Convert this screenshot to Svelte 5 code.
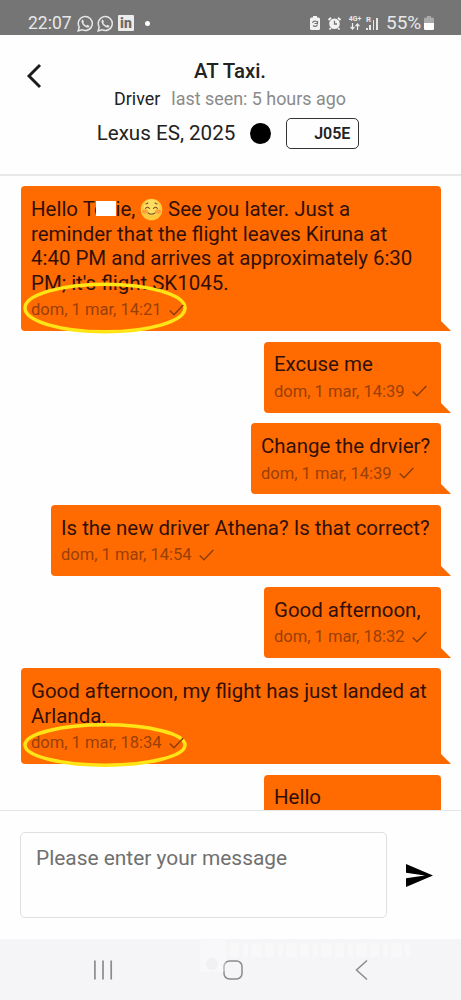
<!-- App.svelte -->
<script lang="ts">
    interface Message {
        lines: string[];
        time?: string;
        width: number;
        circled?: boolean;
        greeting?: boolean;
    }

    const messages: Message[] = [
        {
            lines: [
                ' See you later. Just a',
                'reminder that the flight leaves Kiruna at',
                '4:40 PM and arrives at approximately 6:30',
                "PM; it's flight SK1045."
            ],
            time: 'dom, 1 mar, 14:21',
            width: 420,
            circled: true,
            greeting: true
        },
        { lines: ['Excuse me'], time: 'dom, 1 mar, 14:39', width: 177 },
        { lines: ['Change the drvier?'], time: 'dom, 1 mar, 14:39', width: 190 },
        { lines: ['Is the new driver Athena? Is that correct?'], time: 'dom, 1 mar, 14:54', width: 390 },
        { lines: ['Good afternoon,'], time: 'dom, 1 mar, 18:32', width: 177 },
        {
            lines: ['Good afternoon, my flight has just landed at', 'Arlanda.'],
            time: 'dom, 1 mar, 18:34',
            width: 420,
            circled: true
        },
        { lines: ['Hello'], width: 177 }
    ];

    let draft = $state('');
</script>

{#snippet whatsapp()}
    <svg class="whatsapp" width="17" height="17" viewBox="0 0 17 17" fill="none">
        <path d="M1.2 15.8 2.2 12A7 7 0 1 1 5 14.7Z" stroke="#e6e6e6" stroke-width="1.5" />
        <path d="M5.8 4.5 7 6.7 6.3 7.8C7 9.2 8 10 9.3 10.7L10.4 9.8 12.5 10.9C12.2 12.8 10.3 13 8.6 12.1 6.4 11 4.7 8.8 4.5 6.8 4.4 5.6 5 4.7 5.8 4.5Z" fill="#e6e6e6" />
    </svg>
{/snippet}

<div class="phone">
    <div class="status-bar">
        <div class="status-left">
            <span class="clock">22:07</span>
            {@render whatsapp()}
            {@render whatsapp()}
            <span class="linkedin">in</span>
            <span class="dot"></span>
        </div>
        <div class="status-right">
            <svg width="10" height="14" viewBox="0 0 10 14">
                <path d="M3 0h4v1.5h1.5Q10 1.5 10 3v9.5Q10 14 8.5 14h-7Q0 14 0 12.5V3Q0 1.5 1.5 1.5H3Z" fill="#f2f2f2" />
                <path d="M2.5 7C3 4.8 5.5 4.5 7 6M7.5 8.5C7 10.6 4.5 11 3 9.5M4.5 7.5H7.5V5" fill="none" stroke="#757575" stroke-width="1.1" />
            </svg>
            <svg class="alarm" width="13" height="13" viewBox="0 0 13 13">
                <path d="M.5 3 3 .8M12.5 3 10 .8M2.8 11 1.5 12.5M10.2 11 11.5 12.5" stroke="#f2f2f2" stroke-width="1.8" />
                <circle cx="6.5" cy="6.7" r="5.3" fill="#f2f2f2" />
                <path d="M6.5 3.8V7H9" fill="none" stroke="#757575" stroke-width="1.3" />
            </svg>
            <div class="network">
                <span>4G+</span>
                <svg width="10" height="7" viewBox="0 0 10 7" fill="none" stroke="#f0f0f0" stroke-width="1.2">
                    <path d="M2.5 0V6M.5 3.8 2.5 6 4.5 3.8M7.5 7V1M5.5 3.2 7.5 1 9.5 3.2" />
                </svg>
            </div>
            <div class="signal">
                <span>R</span>
                <i style="height: 2px"></i>
                <i style="height: 5px"></i>
                <i style="height: 10px"></i>
                <i style="height: 12px"></i>
            </div>
            <span class="percent">55%</span>
            <svg width="10" height="14" viewBox="0 0 10 14">
                <path d="M3 0h4v1.5h1.5Q10 1.5 10 3v9.5Q10 14 8.5 14h-7Q0 14 0 12.5V3Q0 1.5 1.5 1.5H3Z" fill="#aaa" />
                <path d="M0 7h10v5.5Q10 14 8.5 14h-7Q0 14 0 12.5Z" fill="#fff" />
            </svg>
        </div>
    </div>

    <header>
        <button class="back" aria-label="Back">
            <svg width="16" height="26" viewBox="0 0 16 26" fill="none" stroke="#1c1c1c" stroke-width="2.9">
                <path d="M14 2 3 13 14 24" />
            </svg>
        </button>
        <div class="details">
            <h1>AT Taxi.</h1>
            <div class="presence">
                <span class="role">Driver</span>
                <span class="seen">last seen: 5 hours ago</span>
            </div>
            <div class="car">
                <span class="model">Lexus ES, 2025</span>
                <span class="color"></span>
                <span class="plate">J05E</span>
            </div>
        </div>
    </header>

    <main>
        {#each messages as message}
            <div class="bubble" style="width: {message.width}px">
                {#each message.lines as line, i}
                    <div class="line">
                        {#if message.greeting && i === 0}<span>Hello To</span><span class="patch"></span><span>ie,</span>
                            <svg class="emoji" width="23" height="23" viewBox="0 0 23 23" fill="none">
                                <circle cx="11.5" cy="11.5" r="10.8" fill="#fec93c" />
                                <circle cx="11.5" cy="9.5" r="8" fill="#ffdc62" />
                                <ellipse cx="5" cy="13.5" rx="3" ry="2.2" fill="#fba23c" />
                                <ellipse cx="18" cy="13.5" rx="3" ry="2.2" fill="#fba23c" />
                                <path d="M5.5 10.5Q7.5 8 9.5 10.5M13.5 10.5Q15.5 8 17.5 10.5M8 15Q11.5 17.5 15 15M6 6 8 5M15 5 17 6" stroke="#81501d" stroke-width="1.1" stroke-linecap="round" />
                            </svg>
                        {/if}<span>{line}</span>
                    </div>
                {/each}
                {#if message.circled}
                    <svg class="ring" class:tall={message.greeting} viewBox="0 0 164 52" preserveAspectRatio="none">
                        <ellipse cx="82" cy="26" rx="80" ry="23.8" fill="none" stroke="#ffe516" stroke-width="3.5" vector-effect="non-scaling-stroke" />
                    </svg>
                {/if}
                {#if message.time}
                    <div class="meta">
                        <span>{message.time}</span>
                        <svg width="15" height="12" viewBox="0 0 15 12" fill="none" stroke="#8c3d0c" stroke-width="1.5">
                            <path d="M.7 6.5 5 10.7 14.3 1" />
                        </svg>
                    </div>
                {/if}
                <svg class="tail" width="11" height="10" viewBox="0 0 11 10">
                    <path d="M0 0H1L11 10H0Z" fill="#fa6900" />
                </svg>
            </div>
        {/each}
    </main>

    <footer>
        <textarea bind:value={draft} placeholder="Please enter your message"></textarea>
        <button class="send" aria-label="Send">
            <svg width="27" height="23" viewBox="0 0 27 23">
                <path d="M0 0 27 11.5 0 23V14.3L19 11.5 0 8.7Z" fill="#000" />
            </svg>
        </button>
    </footer>

    <nav>
        <svg width="20" height="20" viewBox="0 0 20 20" stroke="#8b8b8d" stroke-width="1.7">
            <path d="M1.9 .5V19.5M10 .5V19.5M18.2 .5V19.5" />
        </svg>
        <svg width="20" height="20" viewBox="0 0 20 20" fill="none" stroke="#8b8b8d" stroke-width="1.5">
            <rect x="1" y="1" width="18" height="18" rx="5.5" />
        </svg>
        <svg width="20" height="20" viewBox="0 0 20 20" fill="none" stroke="#8b8b8d" stroke-width="1.5">
            <path d="M15 .5 4.5 10 15 19.5" />
        </svg>
        <!-- faint stamp over the top of the bar -->
        <svg class="stamp" width="212" height="36" viewBox="0 0 212 36" fill="#fff">
            <rect width="26" height="32" rx="3" opacity="0.35" />
            <circle cx="12" cy="24" r="6" fill="#f1f1f3" />
            <path d="M30 10H210" fill="none" stroke="#fff" stroke-width="14" stroke-dasharray="9 4 5 3 11 3" opacity="0.3" />
        </svg>
    </nav>
</div>

<style>
    :global(body) {
        margin: 0;
        background: #fff;
    }

    .phone {
        display: flex;
        flex-direction: column;
        width: 461px;
        height: 1000px;
        overflow: hidden;
        background: #fefefe;
        font-family: Roboto, sans-serif;
        color: #222;
    }

    .status-bar {
        box-sizing: border-box;
        display: flex;
        flex: none;
        justify-content: space-between;
        height: 35px;
        padding: 11px 27px 0 28px;
        background: #757575;
        color: #e8e8e8;
    }

    .status-left,
    .status-right {
        display: flex;
        align-items: center;
        height: 24px;
    }

    .clock {
        width: 49px;
        font-size: 17.5px;
        line-height: 24px;
    }

    .whatsapp {
        margin-right: 3px;
    }

    .linkedin {
        width: 16px;
        height: 16px;
        margin-left: 1px;
        border-radius: 1px;
        background: #ececec;
        color: #6a6a6a;
        font-size: 14px;
        font-weight: 900;
        line-height: 16px;
        text-align: center;
    }

    .dot {
        width: 5px;
        height: 5px;
        margin-left: 11px;
        border-radius: 50%;
        background: #fff;
    }

    .alarm {
        margin-left: 8px;
    }

    .network {
        display: flex;
        flex-direction: column;
        align-items: center;
        width: 14px;
        margin-left: 7px;
        font-size: 7px;
        font-weight: 700;
        line-height: 7px;
    }

    .signal {
        display: flex;
        align-items: flex-end;
        gap: 1.5px;
        position: relative;
        width: 14px;
        height: 13px;
        margin-left: 4px;
    }

    .signal span {
        position: absolute;
        top: -1px;
        left: 0;
        font-size: 8px;
        font-weight: 700;
        line-height: 7px;
    }

    .signal i {
        width: 1.8px;
        background: #e8e8e8;
    }

    .percent {
        width: 36px;
        margin: 0 2px 0 6px;
        font-size: 19px;
        line-height: 24px;
    }

    header {
        box-sizing: border-box;
        display: flex;
        flex: none;
        height: 141px;
        padding-left: 26px;
        border-bottom: 2px solid #e8e8e8;
    }

    button {
        padding: 0;
        border: 0;
        background: none;
    }

    .back {
        width: 16px;
        height: 26px;
        margin-top: 28px;
    }

    .details {
        display: flex;
        flex-direction: column;
        width: 376px;
        align-items: center;
    }

    h1 {
        margin: 22px 0 0;
        font-size: 20.4px;
        font-weight: 500;
        line-height: 28px;
    }

    .presence {
        display: flex;
        gap: 11px;
        font-size: 17.9px;
        line-height: 28px;
    }

    .seen {
        color: #8a8a8a;
    }

    .car {
        display: flex;
        align-items: center;
        height: 40px;
        margin-left: -4px;
        font-size: 20.6px;
    }

    .color {
        width: 21px;
        height: 21px;
        margin: 0 15px;
        border-radius: 50%;
        background: #000;
    }

    .plate {
        box-sizing: border-box;
        width: 73px;
        height: 31px;
        padding-right: 8px;
        border: 1.5px solid #333;
        border-radius: 5px;
        font-size: 16px;
        font-weight: 600;
        line-height: 30px;
        text-align: right;
    }

    main {
        display: flex;
        flex: none;
        flex-direction: column;
        align-items: flex-end;
        gap: 10.5px;
        box-sizing: border-box;
        height: 634px;
        padding: 10.4px 20.5px 0 0;
        overflow: hidden;
    }

    .bubble {
        position: relative;
        box-sizing: border-box;
        flex: none;
        min-height: 71.2px;
        padding: 10.9px 0 6.8px 10.5px;
        border-radius: 4px 4px 0 4px;
        background: #ff6b00;
    }

    .line {
        height: 24.5px;
        color: #32100a;
        font-size: 20.45px;
        line-height: 24.5px;
        white-space: pre;
    }

    .patch {
        display: inline-block;
        width: 20px;
        height: 15px;
        margin-left: -10px;
        background: #fff;
    }

    .emoji {
        margin-left: -0.5px;
        vertical-align: -5px;
    }

    .meta {
        display: flex;
        align-items: center;
        gap: 7.5px;
        position: relative;
        height: 29px;
        color: #993f08;
        font-size: 16.55px;
    }

    .tail {
        position: absolute;
        right: -10px;
        bottom: 0;
    }

    .ring {
        position: absolute;
        left: 2px;
        bottom: -2.5px;
        width: 164px;
        height: 44px;
    }

    .ring.tall {
        height: 52px;
    }

    footer {
        box-sizing: border-box;
        display: flex;
        flex: none;
        align-items: center;
        gap: 19px;
        height: 129px;
        padding-left: 20px;
        border-top: 1.5px solid #e6e6e6;
    }

    textarea {
        box-sizing: border-box;
        width: 367px;
        height: 86px;
        padding: 12px 15px;
        border: 1.5px solid #e0e0e0;
        border-radius: 5px;
        resize: none;
        background: #fefefe;
        font-family: inherit;
        font-size: 20.9px;
        line-height: 26px;
    }

    textarea::placeholder {
        color: #707070;
    }

    .send {
        width: 27px;
        height: 23px;
    }

    nav {
        display: flex;
        flex: 1;
        justify-content: space-between;
        position: relative;
        padding: 21px 89px 0 93px;
        background: #f5f5f7;
    }

    .stamp {
        position: absolute;
        top: 1px;
        left: 200px;
        pointer-events: none;
    }
</style>
